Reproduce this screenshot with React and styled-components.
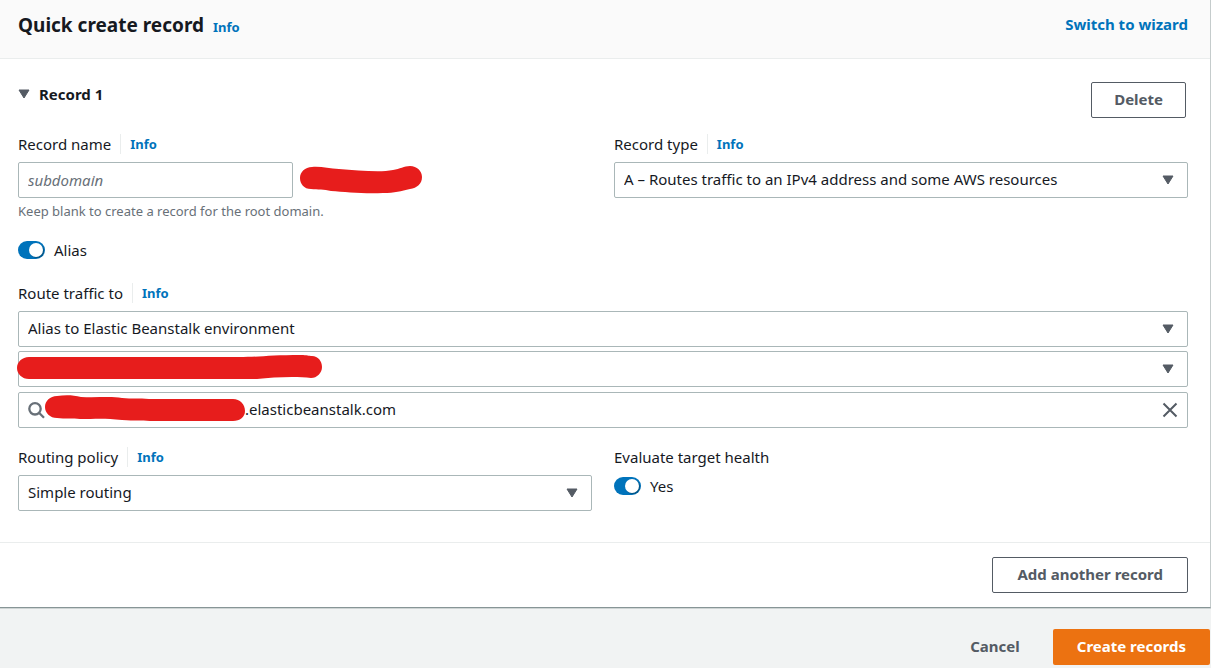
import React, { useState } from "react";
import styled, { createGlobalStyle } from "styled-components";

const GlobalStyle = createGlobalStyle`
  *, *::before, *::after { box-sizing: border-box; }
  body {
    margin: 0;
    background: #f1f3f3;
    color: #16191f;
    font-family: "Noto Sans", "Open Sans", sans-serif;
    font-size: 15px;
    line-height: 20px;
  }
  button, input, select { font: inherit; color: inherit; }
`;

const Card = styled.main`
  background: #fff;
  border-right: 1px solid #c5cccc;
  border-bottom: 1px solid #879596;
  box-shadow: 0 1px 0 #cfd5d5;
`;

const CardHeader = styled.header`
  display: flex;
  justify-content: space-between;
  align-items: flex-start;
  padding: 13px 22px 21px 18px;
  background: #fafafa;
  border-bottom: 1px solid #eaeded;
`;

const TitleGroup = styled.div`
  display: flex;
  align-items: baseline;
  gap: 9px;
`;

const Title = styled.h1`
  margin: 0;
  font-size: 19px;
  line-height: 24px;
  font-weight: 700;
`;

const Link = styled.a`
  color: #0073bb;
  font-size: ${(p) => (p.$large ? "15px" : "13px")};
  line-height: ${(p) => (p.$large ? "22px" : "20px")};
  font-weight: 700;
  text-decoration: none;
`;

const Section = styled.section`
  padding: 23px 22px 31px 18px;
`;

const SectionHeader = styled.div`
  display: flex;
  justify-content: space-between;
  align-items: flex-start;
  margin-bottom: 16px;
  padding-right: 2px;
`;

const Expander = styled.button`
  display: flex;
  align-items: center;
  gap: 9px;
  padding: 2px 0;
  border: 0;
  background: none;
  font-weight: 700;
`;

const buttonPadding = { primary: "24px", link: "16px", wide: "24px" };

const Button = styled.button`
  height: 36px;
  padding: 0 ${(p) => buttonPadding[p.$variant] || "22px"} 2px;
  border: ${(p) =>
    p.$variant === "primary" || p.$variant === "link" ? "0" : "1px solid #545b64"};
  border-radius: 2px;
  background: ${(p) =>
    p.$variant === "primary" ? "#ec7211" : p.$variant === "link" ? "transparent" : "#fff"};
  color: ${(p) => (p.$variant === "primary" ? "#fff" : "#545b64")};
  font-weight: 700;
  white-space: nowrap;
`;

const Columns = styled.div`
  display: grid;
  grid-template-columns: 1fr 1fr;
  column-gap: 22px;
  align-items: start;
`;

const Field = styled.div`
  display: flex;
  flex-direction: column;
  gap: 8px;
`;

const LabelRow = styled.div`
  display: flex;
  align-items: center;
`;

const InfoSlot = styled.span`
  display: flex;
  margin-left: 9px;
  padding-left: 9px;
  border-left: 1px solid #eaeded;
`;

const Stack = styled.div`
  display: flex;
  flex-direction: column;
  gap: 4px;
`;

const SwitchSlot = styled.div`
  padding-top: 5px;
`;

const InputRow = styled.div`
  display: flex;
  align-items: center;
  gap: 6px;
`;

const TextInput = styled.input`
  width: 275px;
  height: 36px;
  padding: 0 9px;
  border: 1px solid #aab7b8;
  border-radius: 2px;
  background: #fff;
  &::placeholder { color: #687078; font-style: italic; opacity: 1; }
`;

const Hint = styled.p`
  margin: -4px 0 0;
  color: #687078;
  font-size: 13px;
  line-height: 18px;
`;

const SelectWrap = styled.div`
  position: relative;
  display: flex;
`;

const Select = styled.select`
  width: 100%;
  height: 36px;
  padding: 0 32px 2px 9px;
  border: 1px solid #aab7b8;
  border-radius: 2px;
  background: #fff;
  appearance: none;
`;

const CaretSlot = styled.span`
  position: absolute;
  top: 0;
  right: 14px;
  bottom: 0;
  display: flex;
  align-items: center;
  pointer-events: none;
`;

const StrokeOver = styled.span`
  position: absolute;
  top: 3px;
  left: -1px;
  display: flex;
  pointer-events: none;
`;

const SearchBox = styled.div`
  display: flex;
  align-items: center;
  height: 36px;
  margin-top: 1px;
  padding: 0 9px;
  border: 1px solid #aab7b8;
  border-radius: 2px;
  background: #fff;
`;

const SearchInput = styled.input`
  flex: 1;
  min-width: 0;
  padding: 0 0 2px;
  border: 0;
  background: transparent;
`;

const StrokeInline = styled.span`
  display: flex;
  margin-bottom: 4px;
`;

const IconButton = styled.button`
  display: flex;
  padding: 0;
  border: 0;
  background: none;
`;

const SwitchLabel = styled.label`
  display: flex;
  align-items: center;
  gap: 9px;
`;

const SwitchInput = styled.input`
  appearance: none;
  position: relative;
  width: 27px;
  height: 18px;
  margin: 0;
  border-radius: 9px;
  background: ${(p) => (p.checked ? "#0073bb" : "#687078")};
  &::after {
    content: "";
    position: absolute;
    top: 2px;
    left: ${(p) => (p.checked ? "11px" : "2px")};
    width: 14px;
    height: 14px;
    border-radius: 50%;
    background: #fff;
    box-shadow: 1px 1px 1px rgba(0, 28, 36, 0.4);
  }
`;

const AliasRow = styled.div`
  padding: 20px 0 23px;
`;

const PolicyRow = styled(Columns)`
  margin-top: 19px;
`;

const CardFooter = styled.div`
  display: flex;
  justify-content: flex-end;
  padding: 14px 22px 14px 18px;
  border-top: 1px solid #eaeded;
`;

const Actions = styled.footer`
  display: flex;
  justify-content: flex-end;
  gap: 17px;
  padding: 21px 1px 3px 0;
`;

const Caret = () => (
  <svg width="12" height="10" viewBox="0 0 12 10" aria-hidden="true">
    <path d="M1 1h10L6 9z" fill="#545b64" stroke="#545b64" strokeWidth="1" strokeLinejoin="round" />
  </svg>
);

const SearchIcon = () => (
  <svg width="17" height="18" viewBox="0 0 17 18" fill="none" stroke="#687078" strokeWidth="2.3" aria-hidden="true">
    <circle cx="7" cy="7.8" r="5.700" />
    <path d="M11 11.800l5 5" />
  </svg>
);

const CloseIcon = () => (
  <svg width="16" height="16" viewBox="0 0 16 16" fill="none" stroke="#545b64" strokeWidth="2" aria-hidden="true">
    <path d="M1.500 1.500l13 13M14.500 1.500l-13 13" />
  </svg>
);

const Scribble = ({ width, height, d }) => (
  <svg width={width} height={height} viewBox={`0 0 ${width} ${height}`} aria-hidden="true">
    <path d={d} fill="#e71d1c" />
  </svg>
);

function Info() {
  return <Link href="#info">Info</Link>;
}

function FieldLabel({ htmlFor, info, children }) {
  return (
    <LabelRow>
      <label htmlFor={htmlFor}>{children}</label>
      {info && (
        <InfoSlot>
          <Info />
        </InfoSlot>
      )}
    </LabelRow>
  );
}

function Dropdown({ children, overlay, ...rest }) {
  return (
    <SelectWrap>
      <Select {...rest}>
        <option>{children}</option>
      </Select>
      {overlay && <StrokeOver>{overlay}</StrokeOver>}
      <CaretSlot>
        <Caret />
      </CaretSlot>
    </SelectWrap>
  );
}

function Switch({ id, children }) {
  const [on, setOn] = useState(true);
  return (
    <SwitchLabel htmlFor={id}>
      <SwitchInput id={id} type="checkbox" checked={on} onChange={(e) => setOn(e.target.checked)} />
      {children}
    </SwitchLabel>
  );
}

export default function App() {
  return (
    <>
      <GlobalStyle />
      <Card>
        <CardHeader>
          <TitleGroup>
            <Title>Quick create record</Title>
            <Info />
          </TitleGroup>
          <Link $large href="#wizard">Switch to wizard</Link>
        </CardHeader>

        <Section>
          <SectionHeader>
            <Expander type="button" aria-expanded="true">
              <Caret />
              Record 1
            </Expander>
            <Button type="button">Delete</Button>
          </SectionHeader>

          <Columns>
            <Field>
              <FieldLabel htmlFor="record-name" info>Record name</FieldLabel>
              <InputRow>
                <TextInput id="record-name" type="text" placeholder="subdomain" />
                <Scribble
                  width={124}
                  height={32}
                  d="M13 3C22 2 30 5 40 5C58 6 80 9 94 6C101 5 105 2 111 2C118 2 123 7 123 13C123 20 118 24 111 25C102 27 96 29 84 29C66 30 46 28 32 27C25 25 19 26 12 25C5 25 1 20 1 14C1 8 6 3 13 3Z"
                />
              </InputRow>
              <Hint>Keep blank to create a record for the root domain.</Hint>
            </Field>
            <Field>
              <FieldLabel htmlFor="record-type" info>Record type</FieldLabel>
              <Dropdown id="record-type">
                A – Routes traffic to an IPv4 address and some AWS resources
              </Dropdown>
            </Field>
          </Columns>

          <AliasRow>
            <Switch id="alias">Alias</Switch>
          </AliasRow>

          <Field>
            <FieldLabel htmlFor="route-target" info>Route traffic to</FieldLabel>
            <Stack>
              <Dropdown id="route-target">Alias to Elastic Beanstalk environment</Dropdown>
              <Dropdown
                aria-label="Region"
                overlay={
                  <Scribble
                    width={306}
                    height={26}
                    d="M12 3H222C242 3 254 1 284 1C290 1 292 2 295 2C301 2 305 7 305 13C305 19 300 24 294 24C280 22 257 23 240 25C236 25 234 25 230 25H12C5 25 0 20 0 14C0 8 5 3 12 3Z"
                  />
                }
              />
              <SearchBox>
                <SearchIcon />
                <StrokeInline>
                  <Scribble
                    width={200}
                    height={28}
                    d="M12 2C20 1 28 1 36 3C52 4 65 2 77 4C87 5 94 4 104 5H188C195 5 200 10 200 17C200 23 195 27 188 27H105C96 26 90 27 77 26C60 24 50 25 35 25C28 24 20 25 12 24C5 24 0 19 0 13C0 7 5 2 12 2Z"
                  />
                </StrokeInline>
                <SearchInput type="text" aria-label="Environment" defaultValue=".elasticbeanstalk.com" />
                <IconButton type="button" aria-label="Clear">
                  <CloseIcon />
                </IconButton>
              </SearchBox>
            </Stack>
          </Field>

          <PolicyRow>
            <Field>
              <FieldLabel htmlFor="routing-policy" info>Routing policy</FieldLabel>
              <Dropdown id="routing-policy">Simple routing</Dropdown>
            </Field>
            <Stack>
              <FieldLabel htmlFor="target-health">Evaluate target health</FieldLabel>
              <SwitchSlot>
                <Switch id="target-health">Yes</Switch>
              </SwitchSlot>
            </Stack>
          </PolicyRow>
        </Section>

        <CardFooter>
          <Button type="button" $variant="wide">Add another record</Button>
        </CardFooter>
      </Card>

      <Actions>
        <Button type="button" $variant="link">Cancel</Button>
        <Button type="button" $variant="primary">Create records</Button>
      </Actions>
    </>
  );
}
